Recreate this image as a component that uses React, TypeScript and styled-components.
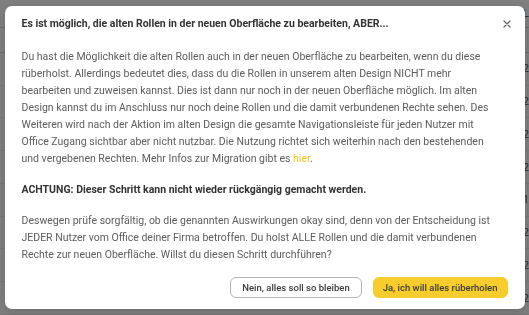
import React from "react";
import styled, { createGlobalStyle } from "styled-components";

const Global = createGlobalStyle`
  html, body { margin: 0; padding: 0; background: #ffffff; }
  body { font-family: Roboto, "Liberation Sans", Arial, sans-serif; }
  * { box-sizing: border-box; }
`;

const Page = styled.div`
  width: 529px;
  height: 315px;
  overflow: hidden;
  background: #ffffff;
  display: flex;
  flex-direction: column;
`;

const PageHeader = styled.div`
  height: 31px;
  border-bottom: 1px solid #d8d8d8;
  display: flex;
  justify-content: flex-end;
  align-items: center;
  font-size: 11px;
  color: #444;
`;

const PageSubHeader = styled.div`
  height: 27px;
  border-bottom: 1px solid #d8d8d8;
`;

const Row = styled.div`
  height: 36px;
  display: flex;
  align-items: center;
  justify-content: flex-end;
  font-size: 11px;
  color: #555;
  border-bottom: 1px solid #eeeeee;
`;

const Overlay = styled.div`
  position: fixed;
  inset: 0;
  background: rgba(0, 0, 0, 0.5);
  display: flex;
  align-items: center;
  justify-content: center;
`;

const Dialog = styled.div`
  width: 520px;
  background: #ffffff;
  border-radius: 7px;
  box-shadow: 0 4px 14px rgba(0, 0, 0, 0.15);
  display: flex;
  flex-direction: column;
`;

const Header = styled.div`
  display: flex;
  align-items: center;
  justify-content: space-between;
  padding: 7px 12px 0 17px;
  height: 28px;
`;

const Title = styled.h2`
  margin: 0;
  font-size: 10.5px;
  font-weight: 700;
  color: #333333;
`;

const Close = styled.button`
  border: 0;
  background: transparent;
  padding: 0;
  width: 12px;
  height: 12px;
  display: flex;
  align-items: center;
  justify-content: center;
  color: #666;
  cursor: pointer;
`;

const Body = styled.div`
  padding: 14px 17px 0 17px;
`;

const Para = styled.p<{ $strong?: boolean }>`
  margin: 0 0 14px 0;
  font-size: 10.5px;
  line-height: 17px;
  white-space: nowrap;
  color: ${(p) => (p.$strong ? "#333333" : "#5c5c5c")};
  font-weight: ${(p) => (p.$strong ? 700 : 400)};
  &:last-child { margin-bottom: 0; }
`;

const Link = styled.a`
  color: #f2c418;
  text-decoration: none;
`;

const Footer = styled.div`
  display: flex;
  justify-content: flex-end;
  gap: 11px;
  padding: 14px 17px 11px 17px;
`;

const Button = styled.button<{ $primary?: boolean }>`
  height: 21px;
  padding: 0 ${(p) => (p.$primary ? 9 : 11)}px;
  border-radius: 6px;
  font-family: Roboto, "Liberation Sans", Arial, sans-serif;
  font-size: 9.5px;
  font-weight: 500;
  color: #3a3a3a;
  background: ${(p) => (p.$primary ? "#f6cd2c" : "#ffffff")};
  border: 1px solid ${(p) => (p.$primary ? "#f6cd2c" : "#b5b5b5")};
  cursor: pointer;
`;

export default function App() {
  const digits = ["2", "2", "2", "2", "1", "2", "2", "2"];
  return (
    <>
      <Global />
      <Page>
        <PageHeader>L</PageHeader>
        <PageSubHeader />
        {digits.map((d, i) => (
          <Row key={i}>{d}</Row>
        ))}
      </Page>
      <Overlay>
        <Dialog>
          <Header>
            <Title>Es ist möglich, die alten Rollen in der neuen Oberfläche zu bearbeiten, ABER...</Title>
            <Close aria-label="Schließen">
              <svg width="8" height="8" viewBox="0 0 8 8">
                <path d="M1 1 L7 7 M7 1 L1 7" stroke="currentColor" strokeWidth="1.3" strokeLinecap="round" />
              </svg>
            </Close>
          </Header>
          <Body>
            <Para>
              Du hast die Möglichkeit die alten Rollen auch in der neuen Oberfläche zu bearbeiten, wenn du diese
              <br />
              rüberholst. Allerdings bedeutet dies, dass du die Rollen in unserem alten Design NICHT mehr
              <br />
              bearbeiten und zuweisen kannst. Dies ist dann nur noch in der neuen Oberfläche möglich. Im alten
              <br />
              Design kannst du im Anschluss nur noch deine Rollen und die damit verbundenen Rechte sehen. Des
              <br />
              Weiteren wird nach der Aktion im alten Design die gesamte Navigationsleiste für jeden Nutzer mit
              <br />
              Office Zugang sichtbar aber nicht nutzbar. Die Nutzung richtet sich weiterhin nach den bestehenden
              <br />
              und vergebenen Rechten. Mehr Infos zur Migration gibt es <Link href="#">hier</Link>.
            </Para>
            <Para $strong>ACHTUNG: Dieser Schritt kann nicht wieder rückgängig gemacht werden.</Para>
            <Para>
              Deswegen prüfe sorgfältig, ob die genannten Auswirkungen okay sind, denn von der Entscheidung ist
              <br />
              JEDER Nutzer vom Office deiner Firma betroffen. Du holst ALLE Rollen und die damit verbundenen
              <br />
              Rechte zur neuen Oberfläche. Willst du diesen Schritt durchführen?
            </Para>
          </Body>
          <Footer>
            <Button>Nein, alles soll so bleiben</Button>
            <Button $primary>Ja, ich will alles rüberholen</Button>
          </Footer>
        </Dialog>
      </Overlay>
    </>
  );
}
